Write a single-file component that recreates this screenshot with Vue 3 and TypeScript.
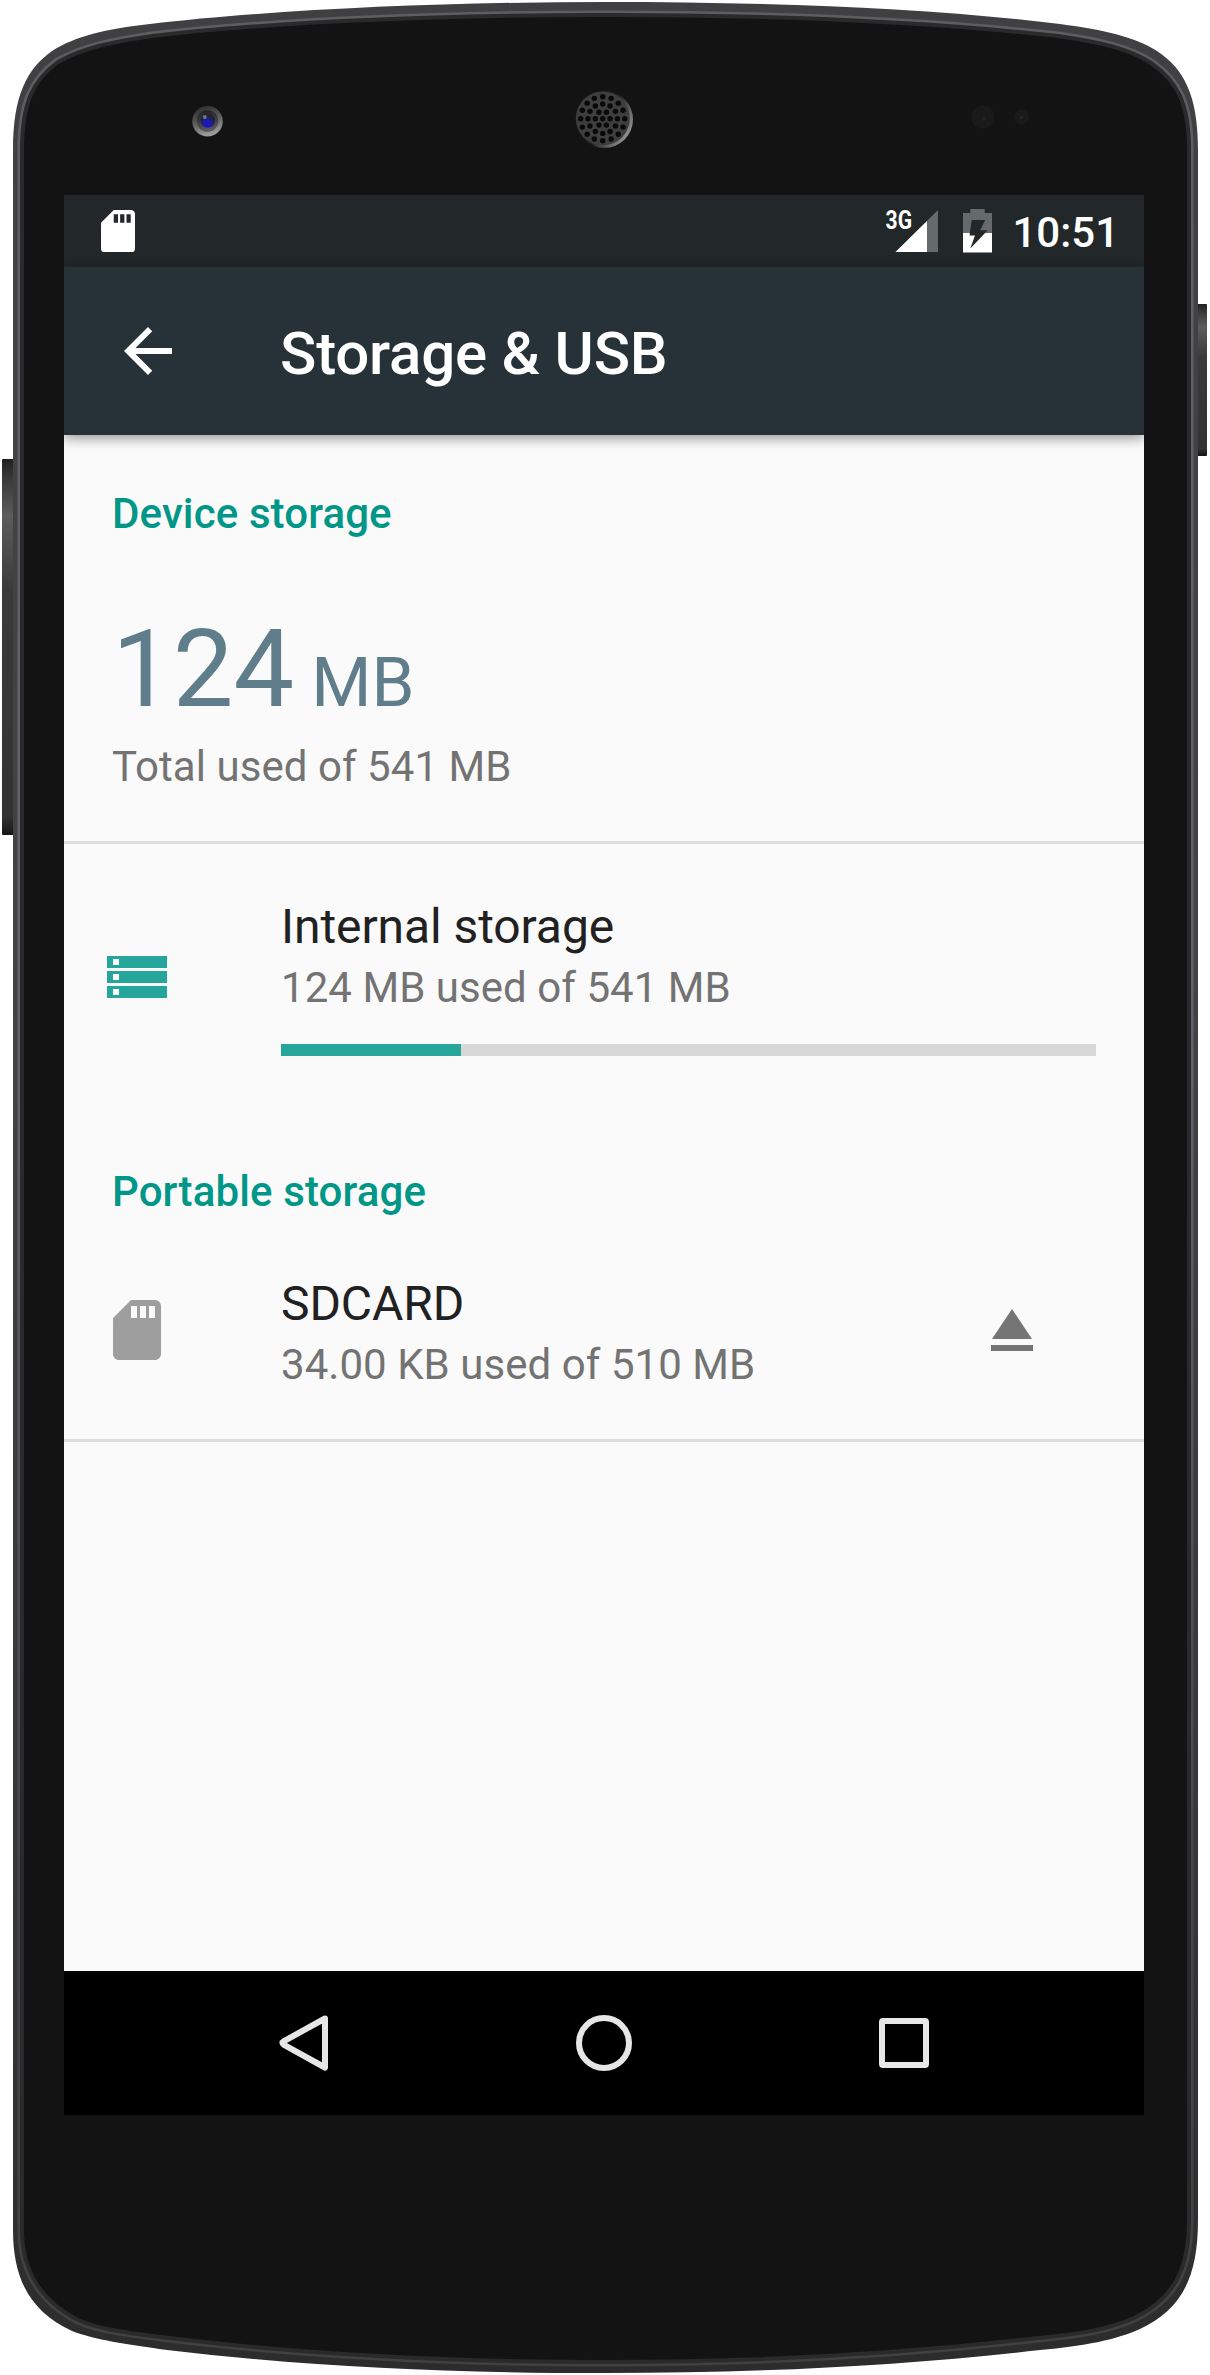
<script setup lang="ts">
interface Point {
  x: number
  y: number
}

const usedMb = 124
const totalMb = 541
const usedPercent = Math.floor((usedMb / totalMb) * 100) + 0.1

// Speaker grille: concentric rings of holes around a centre hole.
const rings: { radius: number; count: number; start: number }[] = [
  { radius: 0, count: 1, start: 0 },
  { radius: 7.4, count: 6, start: 0 },
  { radius: 14.7, count: 12, start: 0 },
  { radius: 22, count: 16, start: 0 },
]
const holes: Point[] = rings.flatMap(({ radius, count, start }) =>
  Array.from({ length: count }, (_, i) => {
    const a = start + (i * 2 * Math.PI) / count
    return { x: 602.7 + radius * Math.cos(a), y: 118.7 + radius * Math.sin(a) }
  }),
)

const glassOutline =
  'M22 2180V150C22 103 33 80 58 62C82 48 112 42 152 36C270 22 440 15 605 15S930 22 1058 36C1100 42 1130 49 1151 63C1177 81 1189 103 1189 150V2220C1189 2271 1173 2299 1134 2318C1110 2329 1080 2334 1038 2338C900 2354 760 2362 605 2362S310 2355 169 2338C130 2333 101 2330 78 2320C40 2300 22 2271 22 2230Z'
</script>

<template>
  <main class="device">
    <svg class="shell" width="1210" height="2375" viewBox="0 0 1210 2375" aria-hidden="true">
      <defs>
        <linearGradient id="rim" x1="0" y1="0" x2="0" y2="1">
          <stop offset="0" stop-color="#404042" />
          <stop offset=".4" stop-color="#434346" />
          <stop offset=".8" stop-color="#363638" />
          <stop offset="1" stop-color="#2c2c2d" />
        </linearGradient>
        <linearGradient id="edge" x1="0" y1="0" x2="0" y2="1">
          <stop offset="0" stop-color="#5e5e61" />
          <stop offset=".45" stop-color="#636367" />
          <stop offset=".8" stop-color="#454547" />
          <stop offset="1" stop-color="#414142" />
        </linearGradient>
        <linearGradient id="key" x1="0" y1="0" x2="0" y2="1">
          <stop offset="0" stop-color="#202020" />
          <stop offset=".05" stop-color="#383838" />
          <stop offset=".15" stop-color="#5c5c5c" />
          <stop offset=".35" stop-color="#3a3a3a" />
          <stop offset=".95" stop-color="#333" />
          <stop offset="1" stop-color="#151515" />
        </linearGradient>
        <linearGradient id="lensRing" x1="0" y1="0" x2=".3" y2="1">
          <stop offset="0" stop-color="#252525" />
          <stop offset=".5" stop-color="#555" />
          <stop offset="1" stop-color="#9a9a9a" />
        </linearGradient>
        <linearGradient id="lensWell" x1="0" y1="0" x2=".2" y2="1">
          <stop offset="0" stop-color="#1c1c1c" />
          <stop offset="1" stop-color="#5a5a5a" />
        </linearGradient>
        <radialGradient id="lens" cx=".45" cy=".75" r=".6">
          <stop offset="0" stop-color="#1414d8" />
          <stop offset=".45" stop-color="#1c1ca0" />
          <stop offset="1" stop-color="#23232f" />
        </radialGradient>
        <linearGradient id="grilleRim" x1="0" y1="0" x2="1" y2=".6">
          <stop offset="0" stop-color="#0c0c0c" />
          <stop offset=".6" stop-color="#222" />
          <stop offset="1" stop-color="#8c8c8c" />
        </linearGradient>
      </defs>

      <rect x="2" y="459" width="14" height="376" rx="1" fill="url(#key)" />
      <rect x="1194" y="304" width="13" height="152" rx="1" fill="url(#key)" />

      <path
        fill="url(#rim)"
        d="M13 2180V150C13 95 27 69 52 51C76 36 105 29 150 24C270 10 440 2 605 2S930 8 1060 24C1105 30 1135 37 1157 51C1184 69 1198 95 1198 150V2220C1198 2280 1180 2310 1140 2329C1115 2340 1085 2346 1040 2350C900 2366 760 2373 605 2373S310 2367 167 2350C125 2344 96 2340 72 2331C31 2312 13 2280 13 2230Z"
      />
      <path fill="none" stroke="url(#edge)" stroke-width="9" :d="glassOutline" />
      <path fill="#131313" stroke="#2a2a2c" stroke-width="4" :d="glassOutline" />

      <circle cx="207.5" cy="121.2" r="15.3" fill="url(#lensRing)" />
      <circle cx="207.5" cy="121" r="10.8" fill="url(#lensWell)" />
      <circle cx="207.8" cy="120.5" r="7.3" fill="url(#lens)" />
      <circle cx="204.8" cy="117" r="2" fill="#769199" opacity=".8" />

      <circle cx="604.5" cy="119.3" r="28.5" fill="url(#grilleRim)" />
      <circle cx="602.8" cy="118.4" r="27" fill="#3e3e3e" />
      <circle v-for="(h, i) in holes" :key="i" :cx="h.x" :cy="h.y" r="2.7" fill="#090909" />

      <circle cx="982.5" cy="117" r="11.5" fill="#1a1a1a" />
      <circle cx="984" cy="118.5" r="2" fill="#301f18" />
      <circle cx="1021.5" cy="117" r="7.5" fill="#1a1a1a" />
      <circle cx="1021.5" cy="117.5" r="1.8" fill="#301f18" />
    </svg>

    <div class="screen">
      <header class="status">
        <svg class="status-sd" width="34" height="42.5" viewBox="4 2 16 20">
          <path fill="#fff" d="M18 2h-8L4.020 8 4 20.2c0 1 .8 1.8 1.8 1.8h12.4c1 0 1.8-.8 1.8-1.8V3.8C20 2.800 19 2 18 2zm-6 6h-2V4h2zm3 0h-2V4h2zm3 0h-2V4h2z" />
        </svg>
        <svg class="signal" width="60" height="54" viewBox="-7 -10 60 54">
          <path fill="#666a6d" d="M52 1v42H9.500z" />
          <path fill="#fff" d="M41 12v31H9.500z" />
          <text x="-.4" y="20" textLength="26.500" lengthAdjust="spacingAndGlyphs">3G</text>
        </svg>
        <svg class="battery" width="29" height="44" viewBox="0 0 29 44">
          <path fill="#666a6d" d="M7.300 0h14.400v4H29v20H0V4h7.300z" />
          <path fill="#fff" d="M0 24h29v19.500H0z" />
          <path fill="#22272a" d="M8.700 11h13.500l-5 10.300h7.500L7.300 39.500 12 26.500H6.500z" />
        </svg>
        <time class="clock">10:51</time>
      </header>

      <div class="app-bar">
        <svg class="back" width="72" height="72" viewBox="0 0 24 24">
          <path fill="#fff" d="M20 11H7.830l5.590-5.590L12 4l-8 8 8 8 1.410-1.410L7.830 13H20v-2z" />
        </svg>
        <h1>Storage &amp; USB</h1>
      </div>

      <div class="content">
        <section class="summary">
          <h2>Device storage</h2>
          <p class="amount">124<small> MB</small></p>
          <p class="detail">Total used of 541 MB</p>
        </section>

        <section class="volumes">
          <div class="row internal">
            <svg class="row-icon" width="72" height="72" viewBox="0 0 24 24">
              <path fill="#26a69a" d="M2 19h20v-4H2zm2-3h2v2H4zM2 5v4h20V5zm4 3H4V6h2zM2 14h20v-4H2zm2-3h2v2H4z" />
            </svg>
            <div class="info">
              <h3>Internal storage</h3>
              <p class="detail">124 MB used of 541 MB</p>
              <div class="meter"><div class="meter-fill" :style="{ width: usedPercent + '%' }"></div></div>
            </div>
          </div>

          <h2>Portable storage</h2>
          <div class="row portable">
            <svg class="row-icon" width="72" height="72" viewBox="0 0 24 24">
              <path fill="#9e9e9e" d="M18 2h-8L4.020 8 4 20c0 1.100.9 2 2 2h12c1.100 0 2-.9 2-2V4c0-1.100-.9-2-2-2zm-6 6h-2V4h2zm3 0h-2V4h2zm3 0h-2V4h2z" />
            </svg>
            <div class="info">
              <h3>SDCARD</h3>
              <p class="detail">34.00 KB used of 510 MB</p>
            </div>
            <svg class="eject" width="72" height="72" viewBox="0 0 24 24">
              <path fill="#757575" d="M5 17h14v2H5zm7-12L5.330 15h13.340z" />
            </svg>
          </div>
        </section>
      </div>

      <nav class="nav">
        <svg width="60" height="60" viewBox="0 0 60 60">
          <path d="M51 5.500 10 28.100q-3.200 1.900 0 3.800L51 54.500z" />
        </svg>
        <svg width="60" height="60" viewBox="0 0 60 60"><circle cx="30" cy="30" r="25" /></svg>
        <svg width="60" height="60" viewBox="0 0 60 60"><rect x="8" y="8" width="44" height="44" rx="1" /></svg>
      </nav>
    </div>
  </main>
</template>

<style>
body {
  background: #fff;
}
</style>

<style scoped>
.device {
  display: grid;
  width: 1210px;
  height: 2375px;
  overflow: hidden;
  font-family: Roboto, "Liberation Sans", sans-serif;
}
.shell,
.screen {
  grid-area: 1 / 1;
}
svg {
  display: block;
  flex: none;
}
.screen {
  display: flex;
  flex-direction: column;
  width: 1080px;
  height: 1920px;
  margin: 195px 0 0 64px;
  overflow: hidden;
  background: #fafafa;
  z-index: 1;
}
h1,
h2,
h3,
p {
  margin: 0;
}
.status {
  display: flex;
  align-items: flex-start;
  flex: none;
  height: 72px;
  box-sizing: border-box;
  padding: 14px 25px 0 37px;
  background: #22272a;
  color: #fff;
}
.status-sd {
  margin-right: auto;
  margin-top: 0.5px;
}
.signal {
  margin: -10px 24px 0 0;
}
.signal text {
  font-size: 25px;
  font-weight: 700;
  fill: #fff;
}
.battery {
  margin-right: 20px;
}
.clock {
  font-size: 42px;
  font-weight: 500;
  line-height: 48px;
}
.app-bar {
  display: flex;
  align-items: center;
  flex: none;
  height: 168px;
  background: #273238;
  color: #fff;
  box-shadow: 0 3px 12px rgba(0, 0, 0, 0.42);
  z-index: 1;
}
.back {
  margin: 0 96px 0 48px;
}
h1 {
  font-size: 60px;
  font-weight: 500;
  line-height: 72px;
  padding-top: 5px;
  letter-spacing: -0.2px;
}
.content {
  flex: 1;
}
h2 {
  font-size: 42px;
  font-weight: 500;
  line-height: 48px;
  letter-spacing: 0.12px;
  color: #009688;
  padding-left: 48px;
}
.summary {
  height: 409px;
  box-sizing: border-box;
  padding-top: 55px;
  border-bottom: 3px solid #dcdcdc;
}
.amount {
  font-size: 108px;
  line-height: 126px;
  color: #607d8b;
  margin-top: 68px;
  padding-left: 48px;
}
.amount small {
  font-size: 69px;
}
.detail {
  font-size: 42px;
  line-height: 48px;
  letter-spacing: 0.05px;
  color: #737373;
}
.summary .detail {
  margin-top: -3px;
  padding-left: 48px;
}
.volumes {
  height: 598px;
  box-sizing: border-box;
  padding-top: 55px;
  border-bottom: 3px solid #dcdcdc;
}
.row {
  display: flex;
}
.row-icon {
  margin: 42px 108px 0 37px;
}
.internal {
  height: 269px;
}
.info {
  flex: 1;
}
h3 {
  font-size: 48px;
  font-weight: 400;
  line-height: 56px;
  letter-spacing: -0.08px;
  color: #212121;
}
.info .detail {
  margin-top: 9px;
}
.meter {
  height: 12px;
  margin: 32px 48px 0 0;
  background: #d8d8d8;
}
.meter-fill {
  height: 100%;
  background: #26a69a;
}
.portable {
  margin-top: 60px;
}
.portable .row-icon {
  margin-top: 18px;
}
.eject {
  margin: 18px 96px 0 0;
}
.nav {
  display: flex;
  align-items: center;
  justify-content: center;
  gap: 240px;
  flex: none;
  height: 144px;
  background: #000;
}
.nav svg {
  fill: none;
  stroke: #e6e6e6;
  stroke-width: 6;
  stroke-linejoin: round;
}
</style>
